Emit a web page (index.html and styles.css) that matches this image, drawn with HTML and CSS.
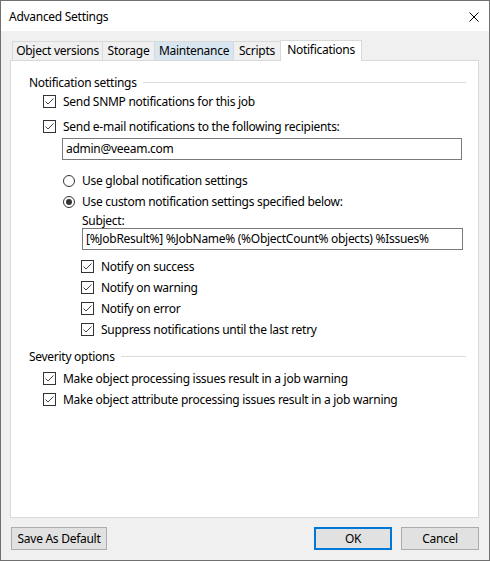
FILE: index.html
```html
<!DOCTYPE html>
<html lang="en">
<head>
    <meta charset="UTF-8">
    <title>Advanced Settings</title>
    <link rel="stylesheet" href="styles.css">
</head>
<body>
    <div class="window">
        <div class="titlebar">
            <span class="title">Advanced Settings</span>
            <span class="close">
                <svg width="10" height="10" viewBox="0 0 10 10"><path d="M0.5 0.5 L9.5 9.5 M9.5 0.5 L0.5 9.5" stroke="#000" stroke-width="1" fill="none"/></svg>
            </span>
        </div>
        <div class="content">
            <div class="tabs">
                <div class="tab t-versions">Object versions</div>
                <div class="tab t-storage">Storage</div>
                <div class="tab t-maint hover">Maintenance</div>
                <div class="tab t-scripts">Scripts</div>
                <div class="tab t-notif active">Notifications</div>
            </div>
            <div class="panel">
                <div class="group">Notification settings</div>
                <div class="row r-snmp">
                    <span class="box"><svg width="11" height="11" viewBox="0 0 11 11"><polyline points="1.5,5.5 4,8 9.5,2.5" fill="none" stroke="#444" stroke-width="1"/></svg></span>
                    <span>Send SNMP notifications for this job</span>
                </div>
                <div class="row r-mail">
                    <span class="box"><svg width="11" height="11" viewBox="0 0 11 11"><polyline points="1.5,5.5 4,8 9.5,2.5" fill="none" stroke="#444" stroke-width="1"/></svg></span>
                    <span>Send e-mail notifications to the following recipients:</span>
                </div>
                <div class="field f-mail">admin@veeam.com</div>

                <div class="row r-global">
                    <span class="radio"></span>
                    <span>Use global notification settings</span>
                </div>
                <div class="row r-custom">
                    <span class="radio on"></span>
                    <span>Use custom notification settings specified below:</span>
                </div>
                <div class="subject">Subject:</div>
                <div class="field f-subject">[%JobResult%] %JobName% (%ObjectCount% objects) %Issues%</div>

                <div class="sub r-first">
                    <div class="row">
                        <span class="box"><svg width="11" height="11" viewBox="0 0 11 11"><polyline points="1.5,5.5 4,8 9.5,2.5" fill="none" stroke="#444" stroke-width="1"/></svg></span>
                        <span>Notify on success</span>
                    </div>
                    <div class="row">
                        <span class="box"><svg width="11" height="11" viewBox="0 0 11 11"><polyline points="1.5,5.5 4,8 9.5,2.5" fill="none" stroke="#444" stroke-width="1"/></svg></span>
                        <span>Notify on warning</span>
                    </div>
                    <div class="row">
                        <span class="box"><svg width="11" height="11" viewBox="0 0 11 11"><polyline points="1.5,5.5 4,8 9.5,2.5" fill="none" stroke="#444" stroke-width="1"/></svg></span>
                        <span>Notify on error</span>
                    </div>
                    <div class="row">
                        <span class="box"><svg width="11" height="11" viewBox="0 0 11 11"><polyline points="1.5,5.5 4,8 9.5,2.5" fill="none" stroke="#444" stroke-width="1"/></svg></span>
                        <span>Suppress notifications until the last retry</span>
                    </div>
                </div>

                <div class="group g-severity">Severity options</div>
                <div class="row r-sev">
                    <span class="box"><svg width="11" height="11" viewBox="0 0 11 11"><polyline points="1.5,5.5 4,8 9.5,2.5" fill="none" stroke="#444" stroke-width="1"/></svg></span>
                    <span>Make object processing issues result in a job warning</span>
                </div>
                <div class="row">
                    <span class="box"><svg width="11" height="11" viewBox="0 0 11 11"><polyline points="1.5,5.5 4,8 9.5,2.5" fill="none" stroke="#444" stroke-width="1"/></svg></span>
                    <span>Make object attribute processing issues result in a job warning</span>
                </div>
            </div>
            <div class="footer">
                <button class="btn btn-wide">Save As Default</button>
                <span class="spacer"></span>
                <button class="btn default">OK</button>
                <button class="btn">Cancel</button>
            </div>
        </div>
    </div>
</body>
</html>
```

FILE: styles.css
```css
* {
    box-sizing: border-box;
}
body {
    margin: 0;
    font-family: "Segoe UI", "Noto Sans", sans-serif;
    font-size: 12px;
    letter-spacing: -0.28px;
    color: #000;
}
.window {
    width: 490px;
    height: 561px;
    border: 1px solid #707070;
    display: flex;
    flex-direction: column;
    background-color: #f0f0f0;
}
.titlebar {
    height: 30px;
    background-color: white;
    display: flex;
    align-items: center;
    padding: 0 10px 0 8px;
}
.title {
    flex: 1;
    padding-top: 1px;
}
.close {
    display: flex;
    margin-top: 1px;
}
.content {
    flex: 1;
    display: flex;
    flex-direction: column;
    padding: 9px 10px 10px 9px;
}

/* tab strip */
.tabs {
    display: flex;
    align-items: flex-end;
    height: 20px;
    padding-left: 3px;
}
.tab {
    height: 19px;
    line-height: 17px;
    margin-left: -1px;
    border: 1px solid #d9d9d9;
    border-bottom: none;
    background-color: #f0f0f0;
    text-align: center;
    white-space: nowrap;
}
.t-versions { width: 91px; }
.t-storage { width: 53px; }
.t-maint { width: 80px; }
.t-scripts { width: 48px; }
.t-notif { width: 82px; }
.tab.hover {
    background-color: #d8e6f2;
}
.tab.active {
    height: 21px;
    margin-bottom: -1px;
    line-height: 17px;
    background-color: white;
    position: relative;
    z-index: 1;
}

.panel {
    flex: 1;
    background-color: white;
    border: 1px solid #d9d9d9;
    padding: 13px 12px 0 18px;
}
.group {
    height: 16px;
    display: flex;
    align-items: center;
}
.group::after {
    content: "";
    flex: 1;
    height: 1px;
    margin-left: 6px;
    background-color: #dcdcdc;
}
.g-severity {
    margin-top: 8px;
}
.row {
    height: 21px;
    display: flex;
    align-items: center;
    padding-left: 14px;
}
.r-snmp {
    margin-top: 1px;
}
.r-mail {
    margin-top: 4px;
}
.r-sev {
    margin-top: 4px;
}
.box {
    width: 13px;
    height: 13px;
    border: 1px solid #333;
    margin-right: 7px;
    display: flex;
    flex-shrink: 0;
}
.radio {
    width: 12px;
    height: 12px;
    border: 1px solid #333;
    border-radius: 50%;
    margin: 0 7px 0 20px;
    display: flex;
    align-items: center;
    justify-content: center;
}
.radio.on::after {
    content: "";
    width: 6px;
    height: 6px;
    border-radius: 50%;
    background-color: #333;
}
.r-global {
    margin-top: 10px;
}
.field {
    height: 22px;
    border: 1px solid #7a7a7a;
    padding: 0 3px;
    line-height: 20px;
    white-space: nowrap;
    overflow: hidden;
}
.f-mail {
    margin: 1px 4px 0 33px;
}
.subject {
    height: 15px;
    line-height: 15px;
    margin: 1px 0 0 53px;
}
.f-subject {
    margin-left: 53px;
    margin-right: 3px;
}
.sub .row {
    padding-left: 52px;
}
.r-first {
    margin-top: 6px;
}

.footer {
    display: flex;
    margin-top: 9px;
    padding-left: 1px;
    gap: 9px;
}
.spacer {
    flex: 1;
}
.btn {
    height: 23px;
    width: 78px;
    font-family: inherit;
    font-size: 12px;
    letter-spacing: inherit;
    color: #000;
    background-color: #e1e1e1;
    border: 1px solid #adadad;
    padding: 0;
}
.btn-wide {
    width: 96px;
}
.btn.default {
    border: 2px solid #0078d7;
}
```
